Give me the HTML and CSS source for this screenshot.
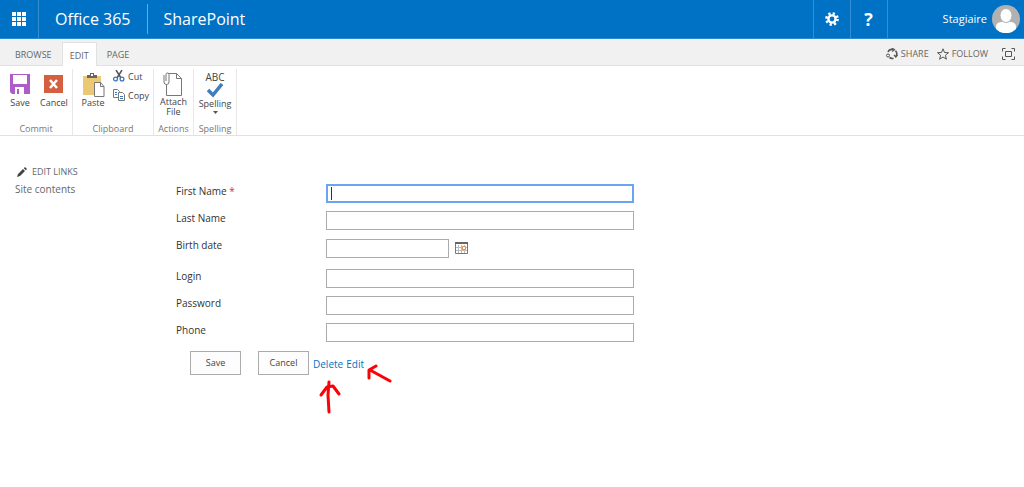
FILE: index.html
```html
<!DOCTYPE html>
<html lang="en">
<head>
    <meta charset="UTF-8">
    <meta name="viewport" content="width=device-width, initial-scale=1.0">
    <title>Stagiaire - Edit</title>
    <link rel="stylesheet" href="styles.css">
</head>
<body>
    <header class="suite-bar">
        <button class="suite-btn launcher" type="button" aria-label="Apps">
            <svg width="14" height="14" viewBox="0 0 14 14" fill="#fff">
                <path d="M0 0h4v4H0zM5 0h4v4H5zM10 0h4v4h-4zM0 5h4v4H0zM5 5h4v4H5zM10 5h4v4h-4zM0 10h4v4H0zM5 10h4v4H5zM10 10h4v4h-4z"/>
            </svg>
        </button>
        <a class="brand" href="#">Office 365</a>
        <a class="brand product" href="#">SharePoint</a>
        <div class="suite-right">
            <button class="suite-btn" type="button" aria-label="Settings">
                <svg width="14" height="14" viewBox="0 0 14 14">
                    <circle cx="7" cy="7" r="5.6" fill="none" stroke="#fff" stroke-width="2.6" stroke-dasharray="2.2 2.2"/>
                    <circle cx="7" cy="7" r="3.6" fill="none" stroke="#fff" stroke-width="2.4"/>
                </svg>
            </button>
            <button class="suite-btn help" type="button">?</button>
            <a class="user" href="#">
                <span>Stagiaire</span>
                <svg width="28" height="28" viewBox="0 0 28 28">
                    <circle cx="14" cy="14" r="14" fill="#b1b1b1"/>
                    <path d="M4 24v-2c0-4 3-5 6-5h8c3 0 6 1 6 5v2a14 14 0 0 1-20 0z" fill="#fff"/>
                    <ellipse cx="14" cy="10.500" rx="6" ry="7" fill="#fff" stroke="#b1b1b1"/>
                </svg>
            </a>
        </div>
    </header>

    <nav class="tabs">
        <a class="tab" href="#">BROWSE</a>
        <a class="tab active" href="#">EDIT</a>
        <a class="tab" href="#">PAGE</a>
        <div class="page-actions">
            <a href="#">
                <svg width="12" height="12" viewBox="0 0 12 12" fill="none" stroke="#555">
                    <path d="M2 4a4.500 4.500 0 0 1 5-2.500M9.500 2.800a4.500 4.500 0 0 1 .5 5.500M7.500 10.300a4.500 4.500 0 0 1-4-.8" stroke-width="1.600"/>
                    <path d="M6 0l2.500 1.700L6 3.500M11.500 7L9.800 9 8 7" stroke-width="1.200"/>
                    <circle cx="2" cy="7.500" r="1.500"/>
                </svg>
                SHARE
            </a>
            <a href="#">
                <svg width="12" height="12" viewBox="0 0 12 12" fill="none" stroke="#555">
                    <path d="M6 .8l1.500 3.700 4 .2-3.100 2.600 1 3.900L6 9l-3.400 2.200 1-3.900L.5 4.700l4-.2z"/>
                </svg>
                FOLLOW
            </a>
            <a class="focus-link" href="#" aria-label="Focus on Content">
                <svg width="13" height="12" viewBox="0 0 13 12" fill="none" stroke="#555">
                    <path d="M.5 3.500v-3h3M9.500.5h3v3M12.500 8.500v3h-3M3.500 11.500h-3v-3M3.500 3.500h6v5h-6z"/>
                </svg>
            </a>
        </div>
    </nav>

    <div class="ribbon">
        <section class="group commit">
            <div class="tools">
                <button class="tool" type="button">
                    <svg width="20" height="20" viewBox="0 0 20 20">
                        <path d="M0 0h20v20H2l-2-2z" fill="#af5ccb"/>
                        <path d="M3 1h14v9H3zM5 13h9v7H5z" fill="#fff"/>
                        <path d="M7 15h2v5H7z" fill="#af5ccb"/>
                    </svg>
                    Save
                </button>
                <button class="tool" type="button">
                    <svg width="20" height="20" viewBox="0 0 20 20">
                        <path d="M0 1h19v18H0z" fill="#d4603f"/>
                        <path d="M6 6l7 8M13 6l-7 8" stroke="#fff" stroke-width="2.500"/>
                    </svg>
                    Cancel
                </button>
            </div>
            <h2>Commit</h2>
        </section>
        <section class="group clipboard">
            <div class="tools">
                <button class="tool" type="button">
                    <svg width="23" height="24" viewBox="0 0 23 24">
                        <path d="M1 3h18v19H1z" fill="#ebc874"/>
                        <path d="M5 2h3V0h4v2h3v3H5z" fill="#666"/>
                        <path d="M9 1h2v2H9z" fill="#fff"/>
                        <path d="M12.500 9.500h6l3.500 4v10h-9.500zM18.500 9.500v4H22" fill="#fff" stroke="#777"/>
                    </svg>
                    Paste
                </button>
                <div class="small-tools">
                    <button type="button">
                        <svg width="12" height="12" viewBox="0 0 12 12" fill="none">
                            <path d="M3 0l5 8M9 0L4 8" stroke="#555" stroke-width="1.500"/>
                            <circle cx="2.500" cy="9" r="1.900" stroke="#3b78b5" stroke-width="1.300"/>
                            <circle cx="9" cy="9" r="1.900" stroke="#3b78b5" stroke-width="1.300"/>
                        </svg>
                        Cut
                    </button>
                    <button type="button">
                        <svg width="12" height="12" viewBox="0 0 12 12" fill="#fff" stroke="#777">
                            <path d="M.5.5h4l2 2v6h-6z"/>
                            <path d="M5.500 3.500h4l2 2v6h-6z"/>
                            <path d="M2 3.500h2M2 5.500h2M7 7.500h3M7 9.500h3" stroke="#3b78b5"/>
                        </svg>
                        Copy
                    </button>
                </div>
            </div>
            <h2>Clipboard</h2>
        </section>
        <section class="group attach">
            <div class="tools">
                <button class="tool" type="button">
                    <svg width="20" height="24" viewBox="0 0 20 24" fill="#fff" stroke="#777">
                        <path d="M3.500 1.500h10l5 5v17h-15zM13.500 1.500v5h5"/>
                        <path d="M1 3v7a2.500 2.500 0 0 0 5 0V2.500a1.500 1.500 0 0 0-3 0V9"/>
                    </svg>
                    <span>Attach<br>File</span>
                </button>
            </div>
            <h2>Actions</h2>
        </section>
        <section class="group spelling">
            <div class="tools">
                <button class="tool" type="button">
                    <span class="abc">ABC</span>
                    <svg width="18" height="15" viewBox="0 0 18 15">
                        <path d="M2 7l5 5L16 1" fill="none" stroke="#3f7dbd" stroke-width="3.500"/>
                    </svg>
                    Spelling
                    <svg class="arrow" width="5" height="3" viewBox="0 0 5 3"><path d="M0 0h5L2.500 3z" fill="#555"/></svg>
                </button>
            </div>
            <h2>Spelling</h2>
        </section>
    </div>

    <div class="content">
        <nav class="side">
            <a class="edit-links" href="#">
                <svg width="10" height="10" viewBox="0 0 10 10" fill="#444">
                    <path d="M0 10l1-3 5-5 2 2-5 5zM6.800 1.200L8 0l2 2-1.200 1.200z"/>
                </svg>
                EDIT LINKS
            </a>
            <a href="#">Site contents</a>
        </nav>
        <main>
            <form class="form">
                <div class="row">
                    <label for="first">First Name <span class="required">*</span></label>
                    <div class="field active">
                        <input id="first" type="text">
                        <span class="caret"></span>
                    </div>
                </div>
                <div class="row">
                    <label for="last">Last Name</label>
                    <div class="field"><input id="last" type="text"></div>
                </div>
                <div class="row date">
                    <label for="birth">Birth date</label>
                    <div class="field">
                        <input id="birth" type="text">
                        <button class="picker" type="button" aria-label="Pick a date">
                            <svg width="13" height="12" viewBox="0 0 13 12">
                                <path d="M.5.5h12v11H.5z" fill="#fff" stroke="#777"/>
                                <path d="M3.500 3v8M6.500 3v8M9.500 3v8M1 5.500h11M1 8.500h11" stroke="#bbb"/>
                                <path d="M0 0h13v2H0z" fill="#666"/>
                                <path d="M7.500 4.500h3v3h-3z" fill="#fff" stroke="#ee8a3c"/>
                            </svg>
                        </button>
                    </div>
                </div>
                <div class="row">
                    <label for="login">Login</label>
                    <div class="field"><input id="login" type="text"></div>
                </div>
                <div class="row">
                    <label for="password">Password</label>
                    <div class="field"><input id="password" type="text"></div>
                </div>
                <div class="row">
                    <label for="phone">Phone</label>
                    <div class="field"><input id="phone" type="text"></div>
                </div>
                <div class="buttons">
                    <button type="button">Save</button>
                    <button type="button">Cancel</button>
                    <div class="links">
                        <a href="#">Delete</a>
                        <a href="#">Edit</a>
                        <svg class="marks" width="80" height="52" viewBox="0 0 80 52" fill="none" stroke="#fb0207" stroke-width="3" stroke-linecap="round" stroke-linejoin="round">
                            <path d="M16 48l-1-17 1-13M8 31l6-8 6-1 6 8"/>
                            <path d="M77 17L57 6M56 14V6l7-4"/>
                        </svg>
                    </div>
                </div>
            </form>
        </main>
    </div>
</body>
</html>
```
FILE: styles.css
```css
*{
    box-sizing: border-box;
}
body{
    min-height: 100vh;
    margin: 0;
    background: #fff;
    color: #444;
    font-family: "Open Sans", "Noto Sans", sans-serif;
    font-size: 10px;
    line-height: 14px;
}
a{
    color: inherit;
    text-decoration: none;
}
button{
    margin: 0;
    padding: 0;
    border: none;
    background: none;
    color: inherit;
    font: inherit;
}
svg{
    display: block;
    flex: none;
}
.suite-bar{
    display: flex;
    align-items: center;
    height: 39px;
    background: #0072c6;
    border-bottom: 1px solid #2a8ad4;
    color: #fff;
}
.suite-btn{
    display: flex;
    align-items: center;
    justify-content: center;
    width: 37px;
    height: 38px;
    border-left: 1px solid #338fd2;
}
.launcher{
    width: 39px;
    border-left: none;
    border-right: 1px solid #338fd2;
}
.brand{
    padding: 0 16px;
    font-size: 16px;
    line-height: 30px;
}
.product{
    border-left: 1px solid #66abdd;
}
.suite-right{
    display: flex;
    align-items: center;
    margin-left: auto;
}
.help{
    font-size: 18px;
    font-weight: bold;
}
.user{
    display: flex;
    align-items: center;
    gap: 5px;
    height: 38px;
    padding: 0 4px 0 55px;
    border-left: 1px solid #338fd2;
    font-size: 11px;
}
.tabs{
    display: flex;
    align-items: flex-end;
    height: 27px;
    padding-left: 5px;
    background: #f1f1f1;
    border-bottom: 1px solid #e1e1e1;
    color: #666;
    font-size: 9px;
}
.tab{
    height: 22px;
    padding: 0 10px;
    line-height: 24px;
}
.active.tab{
    height: 24px;
    margin-bottom: -1px;
    padding: 0 7px;
    background: #fff;
    border: 1px solid #e1e1e1;
    border-bottom: none;
    line-height: 25px;
}
.page-actions{
    display: flex;
    gap: 8px;
    margin-left: auto;
    padding-right: 9px;
}
.page-actions a{
    display: flex;
    align-items: center;
    gap: 3px;
    height: 22px;
}
.focus-link{
    margin-left: 6px;
}
.ribbon{
    display: flex;
    height: 70px;
    padding-top: 3px;
    border-bottom: 1px solid #e1e1e1;
    font-size: 9px;
    line-height: 9px;
}
.group{
    display: flex;
    flex-direction: column;
    justify-content: space-between;
    padding: 0 4px 1px;
    border-right: 1px solid #e8e8e8;
}
.group h2{
    margin: 0;
    color: #777;
    font-size: 9px;
    font-weight: normal;
    line-height: 11px;
    text-align: center;
}
.tools{
    display: flex;
    gap: 8px;
    padding: 1px 0 0 4px;
}
.tool{
    display: flex;
    flex-direction: column;
    align-items: center;
    justify-content: flex-start;
    min-width: 24px;
    padding-top: 4px;
}
.tool svg{
    margin-bottom: 4px;
}
.commit{
    width: 73px;
}
.clipboard{
    width: 81px;
}
.attach{
    width: 40px;
}
.spelling{
    width: 43px;
}
.attach .tools,
.spelling .tools{
    justify-content: center;
    padding-left: 0;
}
.clipboard .tool{
    padding-top: 3px;
}
.clipboard .tool svg{
    margin-bottom: 1px;
}
.attach .tool{
    padding-top: 2px;
    line-height: 10px;
}
.attach .tool svg{
    margin-bottom: 1px;
}
.spelling .tool{
    padding-top: 3px;
}
.spelling .abc{
    margin-bottom: 1px;
    font-size: 10px;
}
.spelling .tool svg{
    margin-bottom: 1px;
}
.spelling .tool .arrow{
    margin: 3px 0 0;
}
.small-tools{
    display: flex;
    flex-direction: column;
    gap: 7px;
}
.small-tools button{
    display: flex;
    align-items: center;
    gap: 3px;
}
.content{
    display: flex;
    padding-top: 29px;
}
.side{
    display: flex;
    flex-direction: column;
    gap: 3px;
    width: 176px;
    padding-left: 15px;
    color: #666;
}
.edit-links{
    display: flex;
    align-items: center;
    gap: 5px;
    padding-left: 2px;
    font-size: 9px;
}
main{
    flex: 1;
    padding-top: 16px;
}
.form{
    max-width: 458px;
}
.row{
    display: flex;
    height: 27px;
}
.row label{
    width: 150px;
    padding-top: 3px;
    color: #333;
}
.required{
    color: #c33;
}
.field{
    display: flex;
    flex: 1;
    align-items: flex-start;
    gap: 6px;
    position: relative;
    padding-top: 3px;
}
.field input{
    width: 100%;
    height: 19px;
    padding: 0 4px;
    border: 1px solid #ababab;
    background: #fff;
    font: inherit;
}
.field.active input{
    border: 2px solid #6ba5f0;
}
.caret{
    position: absolute;
    top: 6px;
    left: 5px;
    width: 1px;
    height: 13px;
    background: #333;
}
.row.date{
    height: 31px;
}
.date .field{
    padding-top: 4px;
}
.date input{
    width: 123px;
}
.picker{
    height: 17px;
}
.buttons{
    display: flex;
    gap: 17px;
    padding: 4px 0 0 14px;
}
.buttons button{
    width: 51px;
    height: 24px;
    border: 1px solid #ababab;
    background: #fdfdfd;
    font-size: 9px;
}
.links{
    display: flex;
    gap: 3px;
    position: relative;
    margin-left: -13px;
    color: #0072c6;
    line-height: 26px;
}
.marks{
    position: absolute;
    top: 13px;
    left: 0;
}
```
